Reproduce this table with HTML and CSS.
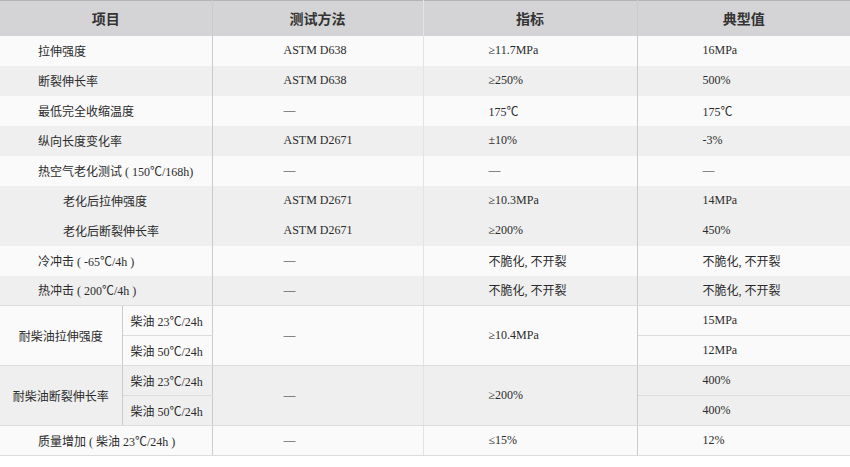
FILE: index.html
```html
<!DOCTYPE html>
<html lang="zh-CN">
<head>
<meta charset="utf-8">
<title>性能参数</title>
<link rel="stylesheet" href="styles.css">
</head>
<body>
<table class="spec">
  <colgroup>
    <col class="w-a"><col class="w-b"><col class="w-c"><col class="w-d"><col class="w-e">
  </colgroup>
  <thead>
    <tr class="head">
      <th colspan="2" class="sep-strong">项目</th>
      <th class="sep-faint">测试方法</th>
      <th class="sep-strong">指标</th>
      <th>典型值</th>
    </tr>
  </thead>
  <tbody>
    <tr class="light">
      <td colspan="2" class="item sep-strong">拉伸强度</td>
      <td class="method sep-faint">ASTM D638</td>
      <td class="val sep-strong">≥11.7MPa</td>
      <td class="val">16MPa</td>
    </tr>
    <tr class="dark">
      <td colspan="2" class="item sep-strong">断裂伸长率</td>
      <td class="method sep-faint">ASTM D638</td>
      <td class="val sep-strong">≥250%</td>
      <td class="val">500%</td>
    </tr>
    <tr class="light">
      <td colspan="2" class="item sep-strong">最低完全收缩温度</td>
      <td class="method sep-faint">—</td>
      <td class="val sep-strong">175℃</td>
      <td class="val">175℃</td>
    </tr>
    <tr class="dark">
      <td colspan="2" class="item sep-strong">纵向长度变化率</td>
      <td class="method sep-faint">ASTM D2671</td>
      <td class="val sep-strong">±10%</td>
      <td class="val">-3%</td>
    </tr>
    <tr class="light">
      <td colspan="2" class="item sep-strong">热空气老化测试 ( 150℃/168h)</td>
      <td class="method sep-faint">—</td>
      <td class="val sep-strong">—</td>
      <td class="val">—</td>
    </tr>
    <tr class="dark">
      <td colspan="2" class="item sub sep-strong">老化后拉伸强度</td>
      <td class="method sep-faint">ASTM D2671</td>
      <td class="val sep-strong">≥10.3MPa</td>
      <td class="val">14MPa</td>
    </tr>
    <tr class="dark">
      <td colspan="2" class="item sub sep-strong">老化后断裂伸长率</td>
      <td class="method sep-faint">ASTM D2671</td>
      <td class="val sep-strong">≥200%</td>
      <td class="val">450%</td>
    </tr>
    <tr class="light">
      <td colspan="2" class="item sep-strong">冷冲击 ( -65℃/4h )</td>
      <td class="method sep-faint">—</td>
      <td class="val sep-strong">不脆化, 不开裂</td>
      <td class="val">不脆化, 不开裂</td>
    </tr>
    <tr class="dark line">
      <td colspan="2" class="item sep-strong">热冲击 ( 200℃/4h )</td>
      <td class="method sep-faint">—</td>
      <td class="val sep-strong">不脆化, 不开裂</td>
      <td class="val">不脆化, 不开裂</td>
    </tr>
    <tr class="light line">
      <td rowspan="2" class="group sep-strong">耐柴油拉伸强度</td>
      <td class="cond sep-strong">柴油 23℃/24h</td>
      <td rowspan="2" class="method sep-faint">—</td>
      <td rowspan="2" class="val sep-strong">≥10.4MPa</td>
      <td class="val">15MPa</td>
    </tr>
    <tr class="light line">
      <td class="cond sep-strong">柴油 50℃/24h</td>
      <td class="val">12MPa</td>
    </tr>
    <tr class="dark line">
      <td rowspan="2" class="group sep-strong">耐柴油断裂伸长率</td>
      <td class="cond sep-strong">柴油 23℃/24h</td>
      <td rowspan="2" class="method sep-faint">—</td>
      <td rowspan="2" class="val sep-strong">≥200%</td>
      <td class="val">400%</td>
    </tr>
    <tr class="dark line">
      <td class="cond sep-strong">柴油 50℃/24h</td>
      <td class="val">400%</td>
    </tr>
    <tr class="light line">
      <td colspan="2" class="item sep-strong">质量增加 ( 柴油 23℃/24h )</td>
      <td class="method sep-faint">—</td>
      <td class="val sep-strong">≤15%</td>
      <td class="val">12%</td>
    </tr>
  </tbody>
</table>
</body>
</html>
```

FILE: styles.css
```css
html, body {
  margin: 0;
  padding: 0;
  background: #ffffff;
}

.spec {
  width: 850px;
  table-layout: fixed;
  border-collapse: collapse;
  font-family: "Liberation Serif", "Noto Sans CJK SC", serif;
  font-size: 12px;
  color: #2b2b2b;
}

.w-a { width: 122px; }
.w-b { width: 90px; }
.w-c { width: 211px; }
.w-d { width: 214px; }
.w-e { width: 213px; }

.spec th,
.spec td {
  padding: 0;
  vertical-align: middle;
  white-space: nowrap;
}

.head {
  height: 35px;
  background: #d4d4d6;
  border-top: 1px solid #b3b3b5;
}

.head th {
  font-family: "Noto Sans CJK SC", sans-serif;
  font-size: 14px;
  font-weight: 700;
  color: #333333;
  text-align: center;
}

.spec tbody tr {
  height: 30px;
}

.light { background: #fafafa; }
.dark { background: #efefef; }

.line td {
  border-bottom: 1px solid #dcdcdc;
}

.sep-strong { border-right: 1px solid #cbcbcb; }
.sep-faint { border-right: 1px solid #e3e3e3; }

.item { padding-left: 38px !important; }
.item.sub { padding-left: 63px !important; }
.method { padding-left: 71px !important; }
.val { padding-left: 65px !important; }
.group { text-align: center; }
.cond { padding-left: 8px !important; }
```
